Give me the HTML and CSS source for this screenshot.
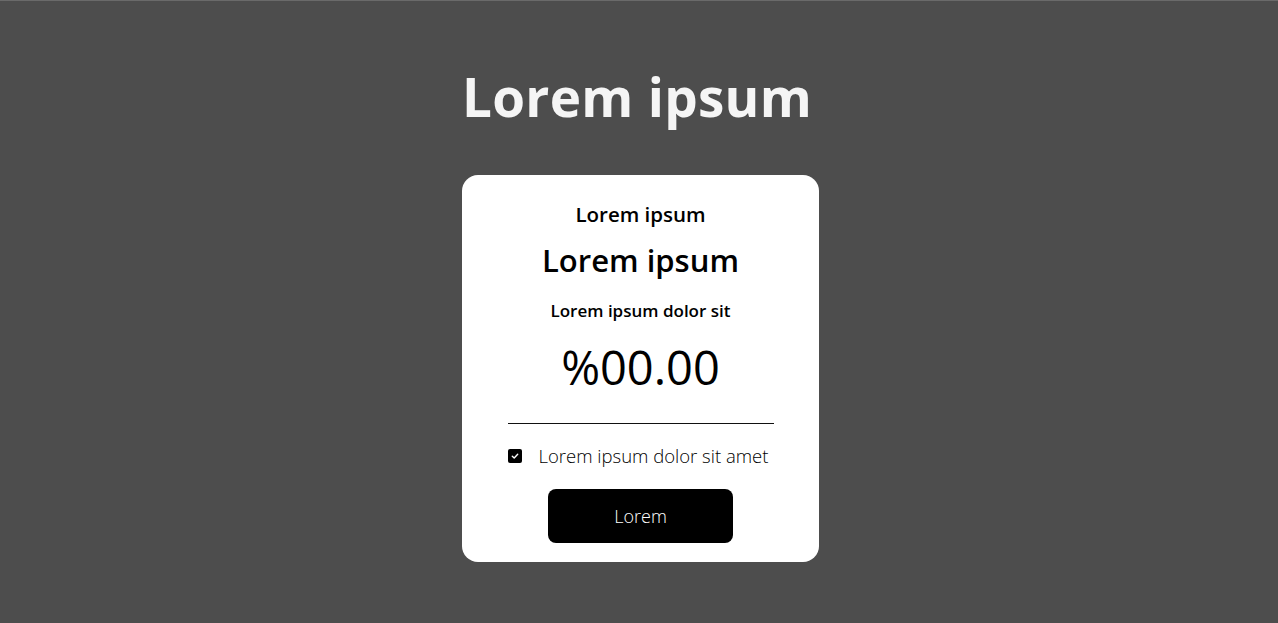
FILE: index.html
```html
<!DOCTYPE html>
<html>
<head>
<meta charset="utf-8">
<link rel="stylesheet" href="styles.css">
</head>
<body>
<main class="page">
  <h1 class="title">Lorem ipsum</h1>
  <section class="card">
    <p class="eyebrow">Lorem ipsum</p>
    <h2 class="plan">Lorem ipsum</h2>
    <p class="sub">Lorem ipsum dolor sit</p>
    <p class="price">%00.00</p>
    <hr class="rule">
    <label class="check">
      <span class="box"><svg width="10" height="10" viewBox="0 0 10 10"><path d="M2.3 5.2 L4.2 7 L7.7 3.2" fill="none" stroke="#fff" stroke-width="1.4" stroke-linecap="round" stroke-linejoin="round"/></svg></span>
      <span class="check-text">Lorem ipsum dolor sit amet</span>
    </label>
    <button class="btn">Lorem</button>
  </section>
</main>
</body>
</html>
```
FILE: styles.css
```css
* { box-sizing: border-box; }
html, body { margin: 0; height: 100%; }
body {
  background: #4d4d4d;
  border-top: 1px solid #6a6a6a;
  font-family: "Open Sans", "Noto Sans", sans-serif;
  color: #000;
}
.page {
  display: flex;
  flex-direction: column;
  align-items: center;
  padding-top: 58px;
  padding-left: 3px;
}
.title {
  margin: 0 7px 0 0;
  color: #f5f5f5;
  font-size: 53px;
  font-weight: 700;
  letter-spacing: 0.3px;
  line-height: 76px;
  height: 76px;
}
.card {
  margin-top: 40px;
  width: 357px;
  height: 387px;
  background: #fff;
  border-radius: 16px;
  display: flex;
  flex-direction: column;
  align-items: center;
  padding-top: 26px;
}
.eyebrow {
  margin: 0;
  font-size: 20.5px;
  font-weight: 600;
  line-height: 26px;
}
.plan {
  margin: 13px 0 0;
  font-size: 31px;
  font-weight: 600;
  line-height: 40px;
}
.sub {
  margin: 19px 0 0;
  font-size: 17px;
  font-weight: 600;
  line-height: 24px;
}
.price {
  margin: 17px 0 0;
  font-size: 47px;
  font-weight: 500;
  line-height: 54px;
}
.rule {
  margin: 29px 0 0;
  width: 266px;
  border: 0;
  border-top: 1px solid #111;
}
.check {
  margin-top: 20px;
  width: 266px;
  display: flex;
  align-items: center;
  gap: 17px;
}
.box {
  width: 14px;
  height: 14px;
  border-radius: 2px;
  background: #000;
  display: flex;
  align-items: center;
  justify-content: center;
}
.check-text {
  font-size: 18.5px;
  font-weight: 300;
  line-height: 24px;
}
.btn {
  margin-top: 21px;
  width: 185px;
  height: 54px;
  border: 0;
  border-radius: 8px;
  background: #000;
  color: #fff;
  font-family: inherit;
  font-size: 18px;
  font-weight: 300;
}
```
